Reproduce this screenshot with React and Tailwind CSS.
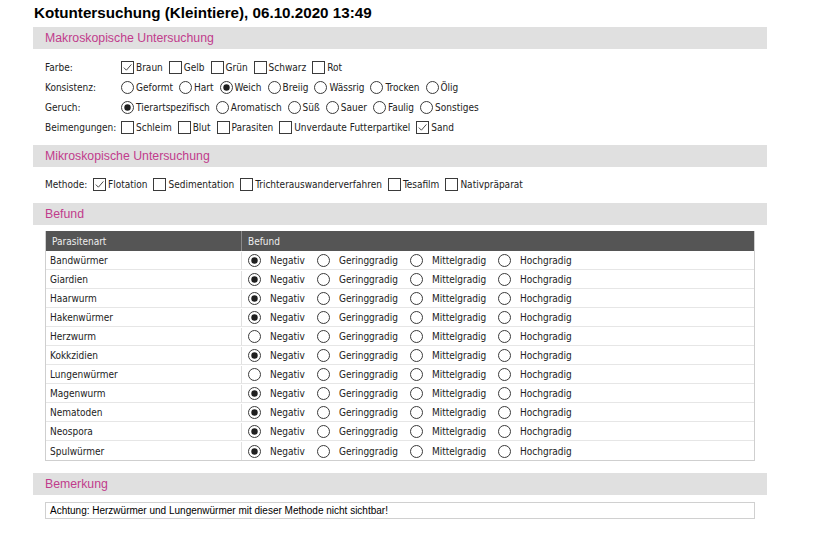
import React from "react";

const font = { fontFamily: '"Liberation Sans", Arial, sans-serif' };
const formFont = { fontFamily: '"DejaVu Sans Condensed", "DejaVu Sans", sans-serif', fontStretch: "condensed" };

const Check = ({ checked }) => (
  <span className="inline-flex h-[13px] w-[13px] shrink-0 items-center justify-center border border-[#3a3a3a] bg-white">
    {checked && (
      <svg viewBox="0 0 11 11" className="h-[11px] w-[11px]">
        <path d="M1.8 5.6 L4.4 8.2 L9.4 2.4" fill="none" stroke="#4a4a4a" strokeWidth="1" />
      </svg>
    )}
  </span>
);

const Radio = ({ checked }) => (
  <svg viewBox="0 0 13 13" className="h-[13px] w-[13px] shrink-0">
    <circle cx="6.5" cy="6.5" r="6" fill="#fff" stroke="#3a3a3a" strokeWidth="1" />
    {checked && <circle cx="6.5" cy="6.5" r="3.2" fill="#1f1f1f" />}
  </svg>
);

const SectionBar = ({ title }) => (
  <div className="flex h-[22px] w-[734px] items-center bg-[#e0e0e0] pl-3 text-[12.3px] text-[#c13c8c]">
    {title}
  </div>
);

const Option = ({ type, label, checked }) => (
  <span className="flex items-center gap-[2px]">
    {type === "check" ? <Check checked={checked} /> : <Radio checked={checked} />}
    <span>{label}</span>
  </span>
);

const FormRow = ({ label, type, items, labelWidth = "w-[76px]" }) => (
  <div className="flex h-5 items-center pl-3 text-[10px] text-[#222]" style={formFont}>
    <span className={labelWidth}>{label}</span>
    <div className="flex items-center gap-[6px]">
      {items.map(([l, c]) => (
        <Option key={l} type={type} label={l} checked={c} />
      ))}
    </div>
  </div>
);

const parasites = [
  ["Bandwürmer", true],
  ["Giardien", true],
  ["Haarwurm", true],
  ["Hakenwürmer", true],
  ["Herzwurm", false],
  ["Kokkzidien", true],
  ["Lungenwürmer", false],
  ["Magenwurm", true],
  ["Nematoden", true],
  ["Neospora", true],
  ["Spulwürmer", true],
];

const grades = [
  ["Negativ", "w-[69px]"],
  ["Geringgradig", "w-[93px]"],
  ["Mittelgradig", "w-[88px]"],
  ["Hochgradig", "w-[88px]"],
];

export default function App() {
  return (
    <div className="min-h-[557px] bg-white pl-[33px] text-[#222]" style={font}>
      {/* Title */}
      <div className="flex h-[27px] items-center pl-px text-[15.2px] font-bold text-black">
        Kotuntersuchung (Kleintiere), 06.10.2020 13:49
      </div>

      <SectionBar title="Makroskopische Untersuchung" />
      <div className="pt-[8px] pb-[8px]">
        <FormRow
          label="Farbe:"
          type="check"
          items={[["Braun", true], ["Gelb"], ["Grün"], ["Schwarz"], ["Rot"]]}
        />
        <FormRow
          label="Konsistenz:"
          type="radio"
          items={[["Geformt"], ["Hart"], ["Weich", true], ["Breiig"], ["Wässrig"], ["Trocken"], ["Ölig"]]}
        />
        <FormRow
          label="Geruch:"
          type="radio"
          items={[["Tierartspezifisch", true], ["Aromatisch"], ["Süß"], ["Sauer"], ["Faulig"], ["Sonstiges"]]}
        />
        <FormRow
          label="Beimengungen:"
          type="check"
          items={[["Schleim"], ["Blut"], ["Parasiten"], ["Unverdaute Futterpartikel"], ["Sand", true]]}
        />
      </div>

      <SectionBar title="Mikroskopische Untersuchung" />
      <div className="pt-[7px] pb-[9px]">
        <FormRow
          label="Methode:"
          labelWidth="w-[48px]"
          type="check"
          items={[["Flotation", true], ["Sedimentation"], ["Trichterauswanderverfahren"], ["Tesafilm"], ["Nativpräparat"]]}
        />
      </div>

      <SectionBar title="Befund" />
      <div className="pt-[6px] pl-3">
        <div className="w-[710px] border-x border-b border-[#cfcfcf] text-[10px]" style={formFont}>
          <div className="flex h-5 bg-[#555555] text-[#eeeeee]">
            <div className="flex w-[196px] items-center border-r border-[#8a8a8a] pl-[6px]">Parasitenart</div>
            <div className="flex flex-1 items-center pl-[6px]">Befund</div>
          </div>
          {parasites.map(([name, neg], i) => (
            <div
              key={name}
              className={`flex h-[19px] pt-px ${i < parasites.length - 1 ? "border-b border-[#e6e6e6]" : ""}`}
            >
              <div className="flex w-[196px] items-center border-r border-[#e0e0e0] pl-1">{name}</div>
              <div className="flex flex-1 items-center pl-[6px]">
                {grades.map(([g, w], j) => (
                  <span key={g} className={`flex items-center ${w}`}>
                    <Radio checked={j === 0 && neg} />
                    <span className="ml-[9px]">{g}</span>
                  </span>
                ))}
              </div>
            </div>
          ))}
        </div>
      </div>

      <div className="pt-3">
        <SectionBar title="Bemerkung" />
      </div>
      <div className="pt-[7px] pl-3">
        <div className="flex h-[17px] w-[710px] items-center border border-[#d0d0d0] pl-1 text-[10px] text-black">
          Achtung: Herzwürmer und Lungenwürmer mit dieser Methode nicht sichtbar!
        </div>
      </div>
    </div>
  );
}
